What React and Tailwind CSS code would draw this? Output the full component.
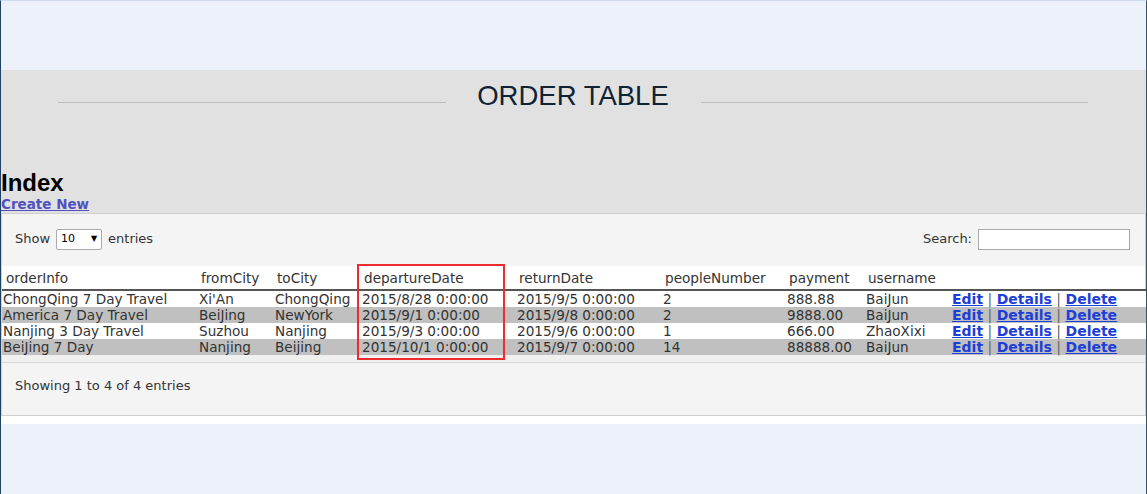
import React from "react";

const rows = [
  ["ChongQing 7 Day Travel", "Xi'An", "ChongQing", "2015/8/28 0:00:00", "2015/9/5 0:00:00", "2", "888.88", "BaiJun"],
  ["America 7 Day Travel", "BeiJing", "NewYork", "2015/9/1 0:00:00", "2015/9/8 0:00:00", "2", "9888.00", "BaiJun"],
  ["Nanjing 3 Day Travel", "Suzhou", "Nanjing", "2015/9/3 0:00:00", "2015/9/6 0:00:00", "1", "666.00", "ZhaoXixi"],
  ["BeiJing 7 Day", "Nanjing", "Beijing", "2015/10/1 0:00:00", "2015/9/7 0:00:00", "14", "88888.00", "BaiJun"],
];

const widths = [195, 76, 87, 155, 146, 124, 79, 86, 197];
const headers = ["orderInfo", "fromCity", "toCity", "departureDate", "returnDate", "peopleNumber", "payment", "username", ""];

export default function App() {
  return (
    <div
      className="w-[1147px] h-[494px] overflow-hidden bg-[#edf2fa] border-l border-r border-t border-l-[#1d4366] border-r-[#3a4f66] border-t-[#cddbee] flex flex-col"
      style={{ fontFamily: '"DejaVu Sans", Verdana, sans-serif' }}
    >
      <div className="h-[69px] shrink-0" />
      <div className="bg-[#e1e1e1] flex flex-col">
        <div className="flex items-center h-[64px] pl-[57px] pr-[58px]">
          <div className="flex-1 h-px bg-[#bdbdbd]" />
          <div
            className="w-[255px] text-center text-[27.5px] text-[#0f2335] leading-none pb-[12px]"
            style={{ fontFamily: '"Liberation Sans", Arial, sans-serif' }}
          >
            ORDER TABLE
          </div>
          <div className="flex-1 h-px bg-[#bdbdbd]" />
        </div>
        <div className="h-[36px]" />
        <div
          className="text-[24px] font-bold leading-[26px] text-black"
          style={{ fontFamily: '"Liberation Sans", Arial, sans-serif' }}
        >
          Index
        </div>
        <a href="#" className="text-[13.5px] font-bold text-[#5050c0] underline leading-[17px] w-fit">
          Create New
        </a>
      </div>
      <div className="bg-white pb-[8px]">
        <div className="bg-[#f4f4f4] border border-[#cfcfcf] text-[13px] text-[#333]">
          <div className="h-[52px] flex items-center justify-between pl-[13px] pr-[15px] pb-[2px]">
            <div className="flex items-center gap-[6px]">
              <span>Show</span>
              <div className="w-[46px] h-[21px] bg-white border border-[#aaa] rounded-[2px] flex items-center justify-between px-[4px] text-[11px] text-black">
                <span>10</span>
                <span className="text-[8px]">▼</span>
              </div>
              <span>entries</span>
            </div>
            <div className="flex items-center gap-[6px]">
              <span>Search:</span>
              <div className="w-[152px] h-[21px] bg-white border border-[#aaa]" />
            </div>
          </div>
          <div className="relative bg-white">
            <table className="border-collapse table-fixed text-[13.6px] text-[#333]" style={{ width: 1145 }}>
              <colgroup>
                {widths.map((w, i) => (
                  <col key={i} style={{ width: w }} />
                ))}
              </colgroup>
              <thead>
                <tr className="h-[24px] border-b-2 border-[#555]">
                  {headers.map((h, i) => (
                    <th key={i} className="text-left font-normal pl-[4px] pt-[1px] text-[#333]">
                      {h}
                    </th>
                  ))}
                </tr>
              </thead>
              <tbody>
                {rows.map((r, i) => (
                  <tr key={i} className={`h-[16px] leading-[16px] ${i % 2 === 1 ? "bg-[#c0c0c0]" : "bg-white"}`}>
                    {r.map((c, j) => (
                      <td key={j} className="whitespace-nowrap p-0" style={{ paddingLeft: j === 0 ? 1 : 2 }}>
                        {c}
                      </td>
                    ))}
                    <td className="pl-[2px] whitespace-nowrap font-bold text-[14px]">
                      <a href="#" className="text-[#1e3ed8] underline">Edit</a>
                      <span className="text-[#666] font-normal"> | </span>
                      <a href="#" className="text-[#1e3ed8] underline">Details</a>
                      <span className="text-[#666] font-normal"> | </span>
                      <a href="#" className="text-[#1e3ed8] underline">Delete</a>
                    </td>
                  </tr>
                ))}
              </tbody>
            </table>
            <div className="h-[8px] bg-[#f0f0f0] border-b border-[#d8d8d8]" />
            <div className="absolute left-[355px] top-[-2px] w-[148px] h-[96px] border-2 border-[#ee2c2c] pointer-events-none" />
          </div>
          <div className="h-[52px] flex items-center pl-[13px] pb-[6px]">
            Showing 1 to 4 of 4 entries
          </div>
        </div>
      </div>
      <div className="flex-1" />
    </div>
  );
}
